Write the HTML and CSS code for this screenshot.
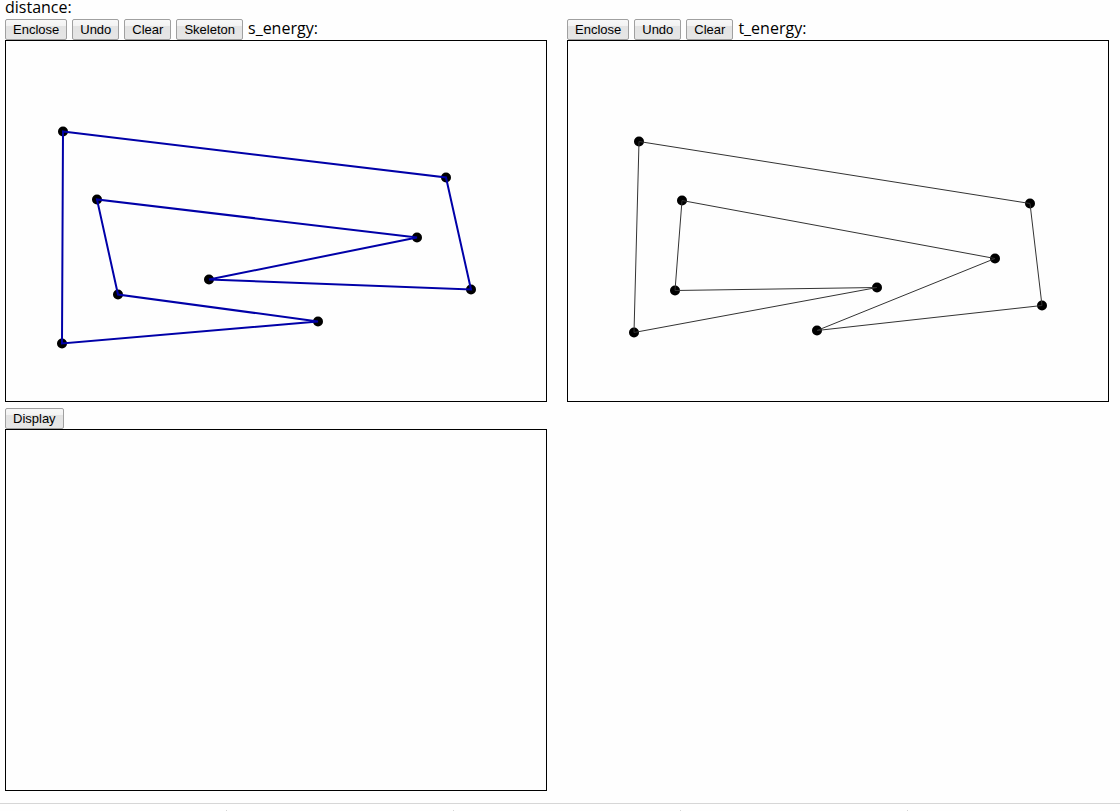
FILE: index.html
```html
<!DOCTYPE html>
<html lang="en">
<head>
<meta charset="utf-8">
<title>Skeleton distance</title>
<link rel="stylesheet" href="styles.css">
</head>
<body>
<main class="page">
  <div class="distance">distance:</div>
  <div class="boards">
    <section class="board">
      <div class="toolbar">
        <button type="button" class="btn">Enclose</button>
        <button type="button" class="btn">Undo</button>
        <button type="button" class="btn">Clear</button>
        <button type="button" class="btn">Skeleton</button>
        <span class="energy">s_energy:</span>
      </div>
      <svg class="canvas" viewBox="0 0 540 360" role="img" aria-label="Source polygon">
        <g class="dots">
          <circle cx="57" cy="90.5" r="5"/><circle cx="440" cy="136.5" r="5"/><circle cx="465" cy="248.5" r="5"/>
          <circle cx="203" cy="238.5" r="5"/><circle cx="411" cy="196.5" r="5"/><circle cx="91" cy="158.5" r="5"/>
          <circle cx="112" cy="253.5" r="5"/><circle cx="312" cy="280.5" r="5"/><circle cx="56" cy="302.5" r="5"/>
        </g>
        <polygon class="outline outline-source" points="57,90.5 440,136.5 465,248.5 203,238.5 411,196.5 91,158.5 112,253.5 312,280.5 56,302.5"/>
      </svg>
    </section>
    <section class="board">
      <div class="toolbar">
        <button type="button" class="btn">Enclose</button>
        <button type="button" class="btn">Undo</button>
        <button type="button" class="btn">Clear</button>
        <span class="energy">t_energy:</span>
      </div>
      <svg class="canvas" viewBox="0 0 540 360" role="img" aria-label="Target polygon">
        <g class="dots">
          <circle cx="71" cy="100.5" r="5"/><circle cx="462" cy="162.5" r="5"/><circle cx="474" cy="264.5" r="5"/>
          <circle cx="249" cy="289.5" r="5"/><circle cx="427" cy="217.5" r="5"/><circle cx="114" cy="159.5" r="5"/>
          <circle cx="107" cy="249.5" r="5"/><circle cx="309" cy="246.5" r="5"/><circle cx="66" cy="291.5" r="5"/>
        </g>
        <polygon class="outline outline-target" points="71,100.5 462,162.5 474,264.5 249,289.5 427,217.5 114,159.5 107,249.5 309,246.5 66,291.5"/>
      </svg>
    </section>
    <section class="board">
      <div class="toolbar">
        <button type="button" class="btn">Display</button>
      </div>
      <svg class="canvas" viewBox="0 0 540 360" role="img" aria-label="Display"></svg>
    </section>
  </div>
</main>
<footer class="shelf">
  <span class="slot"></span><span class="slot"></span><span class="slot"></span><span class="slot"></span>
</footer>
</body>
</html>
```
FILE: styles.css
```css
body {
  margin: 0;
  height: 100vh;
  overflow: hidden;
  background: #fefefe;
  color: #000;
  font: 16px/18px "Open Sans", "Noto Sans", sans-serif;
}

.page {
  padding: 0 11px 12px 5px;
}

.distance {
  height: 19px;
  line-height: 14px;
}

.boards {
  display: grid;
  grid-template-columns: 1fr 1fr;
  column-gap: 20px;
  row-gap: 6px;
}

.toolbar {
  display: flex;
  align-items: flex-start;
  gap: 5px;
  height: 21px;
}

.btn {
  box-sizing: border-box;
  height: 21px;
  margin: 0;
  padding: 0 7px;
  border: 1px solid #a0a0a0;
  border-radius: 2px;
  background: linear-gradient(#f8f8f8 0, #f3f3f3 30%, #e3e3e3 31%, #e6e6e6 100%);
  color: #000;
  font: 13px/19px "Liberation Sans", Arial, sans-serif;
}

.canvas {
  display: block;
  box-sizing: border-box;
  width: 100%;
  aspect-ratio: 542 / 362;
  border: 1px solid #000;
}

.dots {
  fill: #000;
}

.outline {
  fill: none;
}

.outline-source {
  stroke: #0000a8;
  stroke-width: 2;
}

.outline-target {
  stroke: #333;
  stroke-width: 1;
}

.shelf {
  display: flex;
  padding-top: 6px;
  border-top: 1px solid #d6d6d6;
}

.slot {
  box-sizing: border-box;
  flex: 0 0 227px;
  height: 24px;
  border-right: 1px solid #d6d6d6;
}
```
